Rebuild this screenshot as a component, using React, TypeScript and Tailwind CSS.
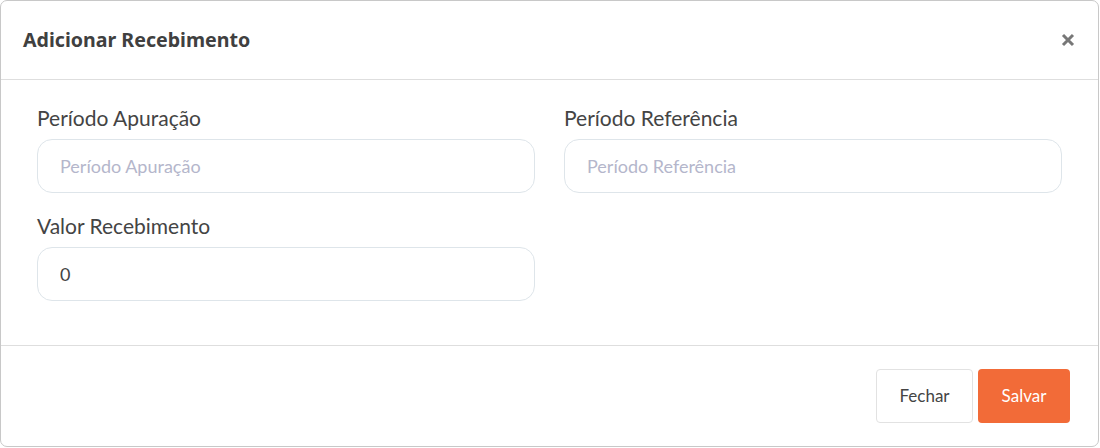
import React from "react";

const Field = ({ label, placeholder, value }: { label: string; placeholder?: string; value?: string }) => (
  <div className="flex flex-col">
    <label className="text-[21px] leading-[28px] text-[#444] mb-[7px]">{label}</label>
    <input
      className="h-[54px] w-full rounded-[15px] border border-[#dee5ea] px-[22px] text-[18px] text-[#444] placeholder:text-[#b4b6cb] outline-none"
      placeholder={placeholder}
      defaultValue={value}
    />
  </div>
);

const App = () => {
  return (
    <div className="w-[1100px] h-[448px] bg-white" style={{ fontFamily: "Lato, 'Noto Sans', sans-serif" }}>
      <div className="w-[1099px] h-[447px] rounded-[7px] border border-[#c8c8c8] bg-white flex flex-col">
        <div className="h-[79px] flex items-center justify-between pl-[22px] pr-[23px] border-b border-[#dedede]">
          <h2 className="text-[19.6px] font-bold text-[#404040]" style={{ fontFamily: "'Noto Sans', sans-serif" }}>
            Adicionar Recebimento
          </h2>
          <button className="text-[#777]">
            <svg width="14" height="14" viewBox="0 0 14 14">
              <path d="M2 2L12 12M12 2L2 12" stroke="currentColor" strokeWidth="3" strokeLinecap="butt" />
            </svg>
          </button>
        </div>
        <div className="flex-1 px-[36px] pt-[24px] border-b border-[#dedede]">
          <div className="grid grid-cols-2 gap-x-[29px] gap-y-[19px]">
            <Field label="Período Apuração" placeholder="Período Apuração" />
            <Field label="Período Referência" placeholder="Período Referência" />
            <Field label="Valor Recebimento" value="0" />
          </div>
        </div>
        <div className="h-[100px] flex items-center justify-end gap-[5px] pr-[28px] pb-[1px]">
          <button className="h-[54px] w-[97px] rounded-[4px] border border-[#e2e2e2] bg-white text-[17px] text-[#444]">
            Fechar
          </button>
          <button className="h-[54px] w-[92px] rounded-[4px] bg-[#f26b38] text-[17px] text-white">
            Salvar
          </button>
        </div>
      </div>
    </div>
  );
};

export default App;
